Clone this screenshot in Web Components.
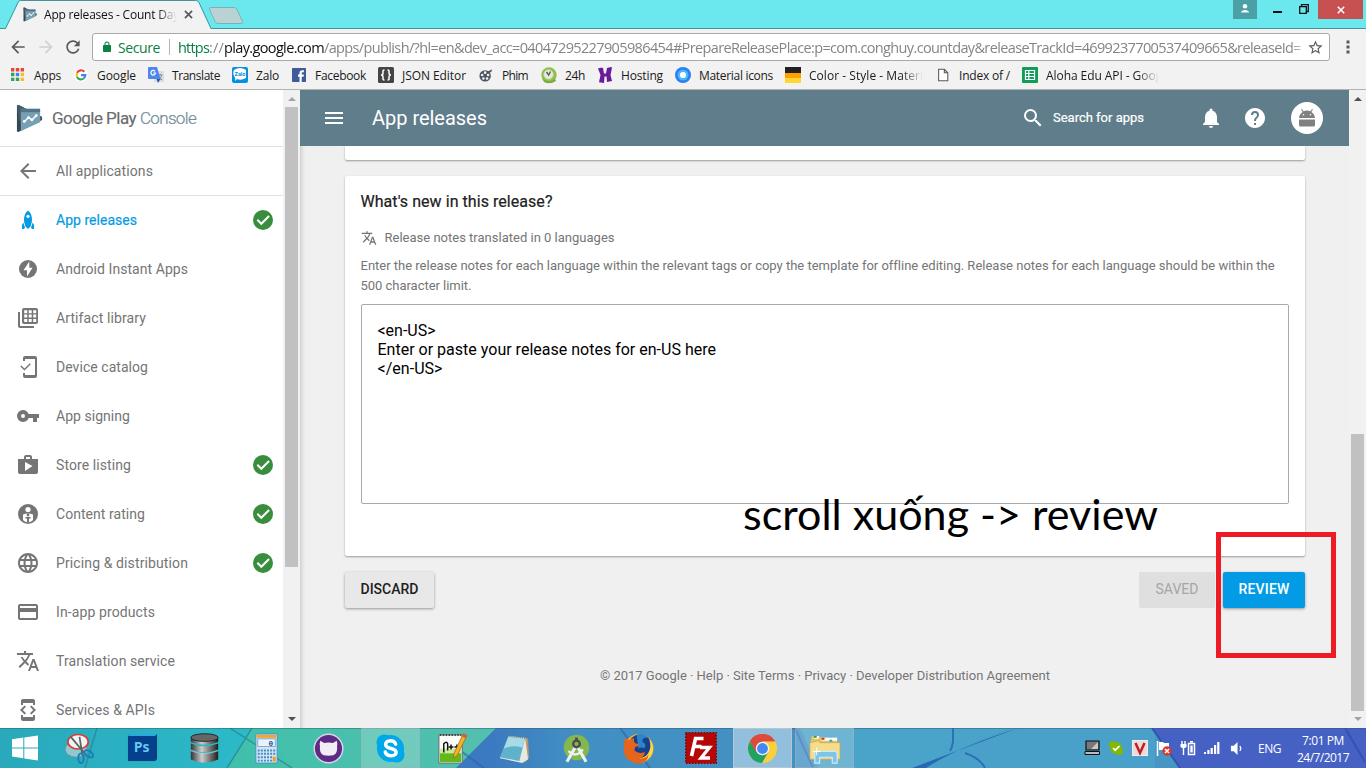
<!DOCTYPE html>
<html lang="en">
<head>
<meta charset="utf-8">
<title>App releases - Count Day</title>
<style>
html,body{margin:0;height:100%;overflow:hidden}
body{font-family:Roboto,"Open Sans",sans-serif;background:#f0f0f0}
</style>
</head>
<body>
<desktop-screen></desktop-screen>
<script>
const def=(name,html,cb)=>customElements.define(name,class extends HTMLElement{
  connectedCallback(){
    if(this.shadowRoot)return;
    const t=document.createElement('template');
    t.innerHTML=typeof html==='function'?html(this):html;
    this.attachShadow({mode:'open'}).append(t.content.cloneNode(true));
    if(cb)cb(this);
  }
});
const a=(el,n,d='')=>el.getAttribute(n)??d;

/* Text run set to a given width through letter spacing */
def('fit-text',`<style>:host{display:block;flex:none;white-space:pre}span{display:inline-block}</style><span><slot></slot></span>`,el=>{
  const w=+a(el,'w',0),s=el.shadowRoot.querySelector('span');
  if(w){const n=[...el.textContent].length;const r=s.getBoundingClientRect().width;
    s.style.letterSpacing=((w-r)/n)+'px';el.style.width=w+'px';}
});

const M=(d,extra='')=>['0 0 24 24',`<path d="${d}"/>${extra}`];
const ICONS={
back:M('M20 11H7.83l5.59-5.59L12 4l-8 8 8 8 1.41-1.41L7.83 13H20z'),
forward:M('M4 11h12.17l-5.59-5.59L12 4l8 8-8 8-1.41-1.41L16.17 13H4z'),
reload:M('M17.65 6.35C16.2 4.9 14.21 4 12 4c-4.42 0-7.99 3.58-7.99 8s3.57 8 7.99 8c3.73 0 6.84-2.55 7.73-6h-2.08c-.82 2.33-3.04 4-5.65 4-3.31 0-6-2.69-6-6s2.69-6 6-6c1.66 0 3.14.69 4.22 1.78L13 11h7V4z'),
lock:M('M18 8h-1V6a5 5 0 0 0-10 0v2H6c-1.1 0-2 .9-2 2v10c0 1.1.9 2 2 2h12c1.1 0 2-.9 2-2V10c0-1.1-.9-2-2-2zM9 8V6a3 3 0 0 1 6 0v2z'),
star:M('M22 9.24l-7.19-.62L12 2 9.19 8.63 2 9.24l5.46 4.73L5.82 21 12 17.27 18.18 21l-1.63-7.03L22 9.24zM12 15.4l-3.76 2.27 1-4.28-3.32-2.88 4.38-.38L12 6.1l1.71 4.04 4.38.38-3.32 2.88 1 4.28L12 15.4z'),
more:['0 0 18 18','<path d="M7.500 2.500h3v3h-3zM7.500 7.500h3v3h-3zM7.500 12.500h3v3h-3z"/>'],
menu:M('M3 18h18v-2H3v2zm0-5h18v-2H3v2zm0-7v2h18V6H3z'),
search:M('M15.5 14h-.79l-.28-.27A6.47 6.47 0 0 0 16 9.5 6.5 6.5 0 1 0 9.5 16c1.61 0 3.09-.59 4.23-1.57l.27.28v.79l5 4.99L20.49 19l-4.99-5zm-6 0a4.5 4.5 0 1 1 0-9 4.5 4.5 0 0 1 0 9z'),
bell:M('M12 22c1.1 0 2-.9 2-2h-4c0 1.1.9 2 2 2zm6-6v-5c0-3.07-1.64-5.64-4.5-6.32V4a1.5 1.5 0 0 0-3 0v.68C7.63 5.36 6 7.92 6 11v5l-2 2v1h16v-1l-2-2z'),
help:M('M12 2C6.48 2 2 6.48 2 12s4.48 10 10 10 10-4.48 10-10S17.52 2 12 2zm1 17h-2v-2h2v2zm2.07-7.75l-.9.92C13.45 12.9 13 13.5 13 15h-2v-.5c0-1.1.45-2.1 1.17-2.83l1.24-1.26c.37-.36.59-.86.59-1.41a2 2 0 0 0-4 0H8a4 4 0 0 1 8 0c0 .88-.36 1.68-.93 2.25z'),
rocket:['0 0 24 24','<path d="M12 2.500C8.800 5 8 8.500 8 11.500c0 2.500.6 4.800 1.600 7L12 21l2.400-2.500c1-2.200 1.600-4.500 1.600-7C16 8.500 15.200 5 12 2.500z"/><path d="M7.300 14.500L6 17v4h2l1-1.500zM16.700 14.500L18 17v4h-2l-1-1.500z"/><circle cx="12" cy="8.300" r="1.600" fill="#fff"/>'],
bolt:['0 0 24 24','<circle cx="12" cy="12" r="9"/><path d="M13.300 4.500L7.500 13.200H11v6.300l5.500-8.700H13.300z" fill="#fff"/>'],
library:['0 0 24 24','<path d="M4 6H2v14a2 2 0 0 0 2 2h14v-2H4z"/><rect x="6" y="2" width="16" height="16" rx="2"/><path fill="#fff" d="M8.200 4.200h3v3h-3zM12.700 4.200h3v3h-3zM17.200 4.200h3v3h-3zM8.200 8.600h3v3h-3zM12.700 8.600h3v3h-3zM17.200 8.600h3v3h-3zM8.200 13h3v3h-3zM12.700 13h3v3h-3zM17.200 13h3v3h-3z"/>'],
device:['0 0 24 24','<path d="M19 1H9a2 2 0 0 0-2 2v3h2V4h10v16H9v-2H7v3a2 2 0 0 0 2 2h10a2 2 0 0 0 2-2V3a2 2 0 0 0-2-2z"/><path d="M13.800 8.200l-5.300 5.300-3.200-3.100-1 1 4.200 4.200 6.300-6.300z"/>'],
key:M('M12.65 10C11.83 7.67 9.61 6 7 6a6 6 0 1 0 5.65 8H17v4h4v-4h2v-4H12.650zM7 14a2 2 0 1 1 0-4 2 2 0 0 1 0 4z'),
store:M('M16 6V4c0-1.110-.89-2-2-2h-4c-1.110 0-2 .89-2 2v2H2v13c0 1.110.89 2 2 2h16c1.110 0 2-.89 2-2V6h-6zm-6-2h4v2h-4V4zM9 18V9l7.500 4L9 18z'),
rating:['0 0 24 24','<circle cx="12" cy="12" r="10"/><circle cx="12" cy="7.500" r="2.600" fill="#fff"/><path fill="#fff" d="M7 12.500c3-1.500 7-1.500 10 0V18c-1.500 1.600-3 2.200-5 2.200S8.500 19.600 7 18z"/><circle cx="12" cy="13" r="1.400"/><path d="M9.500 15h5v1.500H13V20h-2v-3.500H9.500z"/>'],
globe:M('M11.99 2C6.470 2 2 6.480 2 12s4.470 10 9.990 10C17.520 22 22 17.520 22 12S17.520 2 11.990 2zm6.930 6h-2.950a15.650 15.650 0 0 0-1.380-3.560A8.030 8.030 0 0 1 18.920 8zM12 4.040c.83 1.200 1.480 2.530 1.910 3.960h-3.820c.43-1.430 1.080-2.760 1.910-3.960zM4.260 14a8.200 8.200 0 0 1 0-4h3.380a16.500 16.500 0 0 0 0 4H4.260zm.82 2h2.950c.32 1.250.78 2.450 1.380 3.560A7.990 7.990 0 0 1 5.080 16zm2.950-8H5.080a7.990 7.990 0 0 1 4.330-3.560A15.650 15.650 0 0 0 8.030 8zM12 19.960A14 14 0 0 1 10.090 16h3.820A14 14 0 0 1 12 19.960zM14.340 14H9.660a14.700 14.700 0 0 1 0-4h4.680a14.700 14.700 0 0 1 0 4zm.25 5.560c.6-1.110 1.060-2.310 1.380-3.560h2.950a8.030 8.030 0 0 1-4.330 3.560zM16.360 14a16.500 16.500 0 0 0 0-4h3.380a8.200 8.200 0 0 1 0 4h-3.380z'),
card:M('M20 4H4c-1.110 0-1.990.89-1.990 2L2 18c0 1.110.89 2 2 2h16c1.110 0 2-.89 2-2V6c0-1.110-.89-2-2-2zm0 14H4v-6h16v6zm0-10H4V6h16v2z'),
translate:M('M12.870 15.070l-2.540-2.510.03-.03A17.520 17.520 0 0 0 14.070 6H17V4h-7V2H8v2H1v1.990h11.170C11.500 7.920 10.440 9.750 9 11.350 8.070 10.320 7.300 9.190 6.690 8h-2c.73 1.630 1.730 3.170 2.980 4.560l-5.090 5.020L4 19l5-5 3.110 3.110.76-2.040zM18.500 10h-2L12 22h2l1.120-3h4.750L21 22h2l-4.500-12zm-2.620 7l1.620-4.330L19.120 17h-3.240z'),
api:M('M7 5h10v2h2V3c0-1.100-.9-1.990-2-1.990L7 1c-1.100 0-2 .9-2 2v4h2V5zm8.410 11.590L20 12l-4.590-4.590L14 8.830 17.170 12 14 15.170l1.410 1.420zM10 15.170L6.830 12 10 8.830 8.590 7.410 4 12l4.590 4.590L10 15.170zM17 19H7v-2H5v4c0 1.100.9 2 2 2h10c1.100 0 2-.9 2-2v-4h-2v2z'),
check:['0 0 20 20','<circle cx="10" cy="10" r="10" fill="#388e3c"/><path d="M4.300 9.800l4 4 7.800-7.800" fill="none" stroke="#fff" stroke-width="2"/>'],
play:['0 0 28 30','<path d="M1 1.500L2.500 1 27 13.500v3L2.500 29 1 28.500z" fill="#37474f"/><path d="M1 1.500L3 1 27 13.500v3L3 17z" fill="#455a64"/><path d="M5 5h20v14L5 28z" fill="#78a0b4"/><path d="M5 5h20v3.500H5z" fill="#52748a"/><path d="M8.500 18.500l4.500-4.500 3.500 2.500 5-5" fill="none" stroke="#fff" stroke-width="1.500"/><g fill="#fff"><circle cx="8.500" cy="18" r="1.400"/><circle cx="13" cy="14" r="1.400"/><circle cx="16.500" cy="16.500" r="1.400"/><circle cx="21" cy="12" r="1.400"/></g>'],
droid:['0 0 32 32','<circle cx="16" cy="16" r="16" fill="#fff"/><path d="M8 16a8 8 0 0 1 3.600-6L10 7.500l.9-.5 1.600 2.300a9 9 0 0 1 7 0L21 7l.9.500-1.500 2.500a8 8 0 0 1 3.600 6zM8 17.500h16V23a1.500 1.500 0 0 1-1.500 1.500h-13A1.500 1.500 0 0 1 8 23z" fill="#808080"/><circle cx="12.500" cy="12.800" r=".8" fill="#fff"/><circle cx="19.500" cy="12.800" r=".8" fill="#fff"/>'],
close:['0 0 10 10','<path d="M1 1l8 8M9 1l-8 8" stroke="currentColor" stroke-width="1.900"/>'],
apps:['0 0 14 14','<g fill="#e8453c"><path d="M0 0h3.500v3.500H0zM5 0h3.500v3.500H5zM10 0h3.500v3.500H10z"/></g><path fill="#35a355" d="M0 5h3.500v3.500H0zM0 10h3.500v3.500H0z"/><path fill="#3f83f1" d="M5 5h3.500v3.500H5z"/><path fill="#35a355" d="M5 10h3.500v3.500H5z"/><path fill="#fabb2d" d="M10 5h3.500v3.500H10zM10 10h3.500v3.500H10z"/>'],
google:['0 0 16 16','<circle cx="8" cy="8" r="8" fill="#fff"/><g fill="none" stroke-width="2.400"><path d="M11.800 4.300A5 5 0 0 0 3.500 5.600" stroke="#ea4335"/><path d="M3.500 5.600a5.200 5.200 0 0 0 0 4.800" stroke="#fbbc05"/><path d="M3.500 10.400a5 5 0 0 0 7.800 1.400" stroke="#34a853"/><path d="M11.300 11.800A5 5 0 0 0 13 8.100H8" stroke="#4285f4"/></g>'],
gtrans:['0 0 16 16','<rect x="6" y="4" width="10" height="11" rx="1" fill="#dcdcdc"/><path d="M9.500 8h5M12 6.800V8M10.300 12.500c2-1 3-2.500 3.200-4M10.500 9.500c.8 1.800 2 2.600 3.500 3.200" stroke="#6f8c9b" fill="none"/><path d="M1 0h8l3.500 12H1a1 1 0 0 1-1-1V1a1 1 0 0 1 1-1z" fill="#4f86ec"/><path d="M8.500 12h4L10 16z" fill="#3057b8"/><path d="M7 4.300A2.300 2.300 0 1 0 7.500 6H5.300" fill="none" stroke="#fff" stroke-width="1.200"/>'],
zalo:['0 0 16 16','<rect width="16" height="16" rx="2" fill="#0a8ee0"/><path d="M2 3Q8-1 14 3v8q-5 3-9 1l-2 2 .3-3Q0 7 2 3z" fill="#fff"/><text x="8" y="9" font-size="5.500" font-weight="bold" text-anchor="middle" fill="#0a8ee0" font-family="Roboto,sans-serif">Zalo</text>'],
fb:['0 0 14 14','<rect width="14" height="14" rx=".7" fill="#3f5b9a"/><path d="M7.500 14V8.700H6V6.600h1.500V5.300c0-2 1-3 2.900-3h1.500v2h-1.100c-.8 0-1.100.3-1.100 1v1.300h2.200l-.3 2.100H9.700V14z" fill="#fff"/>'],
json:['0 0 16 16','<rect width="16" height="16" rx="1.500" fill="#454545"/><path d="M6.500 3C4.500 3 5 4.500 5 6S4.500 8 3 8c1.500 0 2 .5 2 2s-.5 3 1.500 3M9.500 3c2 0 1.500 1.500 1.500 3s.5 2 2 2c-1.500 0-2 .5-2 2s.5 3-1.500 3" fill="none" stroke="#fff" stroke-width="1.500"/>'],
film:['0 0 16 16','<circle cx="7" cy="9" r="6.500" fill="#4b5460"/><path d="M10 4l5-2.500-1 3-2.500 1z" fill="#4b5460"/><g fill="#f2f2f2"><circle cx="7" cy="5.300" r="1.500"/><circle cx="3.600" cy="8" r="1.500"/><circle cx="10.400" cy="8" r="1.500"/><circle cx="5" cy="12" r="1.500"/><circle cx="9.200" cy="12" r="1.500"/></g>'],
h24:['0 0 16 16','<circle cx="8" cy="8" r="7.700" fill="#8fc04a"/><path d="M1 11q5 6 13 1l1 2q-6 4-12 1z" fill="#7cab3e"/><circle cx="7.500" cy="7.500" r="5" fill="#e3ead9" stroke="#a4c77a" stroke-width=".8"/><path d="M5.500 5l2.200 3L9.500 4.500" fill="none" stroke="#555" stroke-width="1.300"/>'],
hosting:['0 0 16 16','<path d="M1 1.500c2-1 4-1 5-.5L7 6.500h2L10 1l4-1 1 .5-1.500 7.500L15 14l-5 1-.5-5.500H7.500L7 16l-5-.7L3.500 8z" fill="#6a1b9a"/>'],
mi:['0 0 16 16','<circle cx="8" cy="8" r="8" fill="#2b7cf5"/><circle cx="8" cy="8" r="5.500" fill="#45b9fb"/><circle cx="8" cy="8" r="3.100" fill="#fff"/>'],
color:['0 0 16 16','<path d="M0 0h16v6H0z" fill="#212121"/><path d="M0 6h16v5H0z" fill="#ffa000"/><path d="M0 11h16v5H0z" fill="#fdd835"/>'],
file:['0 0 16 16','<path d="M3 1.500h6.500l4 4v9H3zM9.500 1.500v4h4" fill="#fff" stroke="#5a5a5a" stroke-width="1.200"/>'],
sheet:['0 0 16 16','<rect width="16" height="16" rx="1" fill="#0f9d58"/><path d="M3.500 3.500h9v9h-9zM3.500 6.500h9M3.500 9.500h9M6.800 3.500v9" fill="none" stroke="#fff" stroke-width="1.200"/>'],
person:['0 0 24 19','<rect width="24" height="19" fill="#4aa0a5"/><circle cx="12" cy="6.200" r="2.200" fill="#fff"/><path d="M8 12.500c0-3.500 8-3.500 8 0z" fill="#fff"/>'],
restore:['0 0 10 10','<path d="M.7 2.700h6.600v6.600H.7zM2.500 2.500v-1.800h6.800v6.800H7.500" fill="none" stroke="#111" stroke-width="1.300"/>'],
win:['0 0 26 26','<path fill="#fff" d="M0 4.200L11.300 2.600v9.800H0zM12.300 2.400L26 .4v12H12.300zM0 13.400h11.300v9.800L0 21.600zM12.300 13.400H26V25.500l-13.700-2z"/>'],
snip:['0 0 32 32','<ellipse cx="12.500" cy="13" rx="11.500" ry="8" fill="#8fc9cf" stroke="#6d8e99" transform="translate(-1 4)"/><ellipse cx="13.500" cy="9" rx="10.500" ry="7.500" fill="#f5f3f3" stroke="#d93a3a" stroke-width="1.700"/><path d="M6 4l15 18M15 4l3 19" stroke="#566" stroke-width="1.800"/><ellipse cx="24.500" cy="21.500" rx="5" ry="2.800" fill="none" stroke="#1d7bb8" stroke-width="2" transform="rotate(35 24.500 21.500)"/><ellipse cx="16.500" cy="26" rx="2.800" ry="5" fill="none" stroke="#1d7bb8" stroke-width="2"/>'],
ps:['0 0 32 32','<path d="M1 3l2-2h28v26l-2 2H1z" fill="#0a3d82"/><path d="M1 3h28v26H1z" fill="#04408c"/><path d="M1 3l2-2h28l-2 2z" fill="#2aa8e0"/><text x="15" y="20" text-anchor="middle" font-family="Open Sans,sans-serif" font-weight="bold" font-size="14.500" fill="#63c8f2">Ps</text>'],
db:['0 0 32 34','<defs><linearGradient id="g"><stop offset="0" stop-color="#333"/><stop offset=".4" stop-color="#ccc"/><stop offset="1" stop-color="#1d1d1d"/></linearGradient></defs><g fill="url(#g)"><path d="M1 5h30v5q-15 6-30 0zM1 11.500q15 6 30 0V18q-15 6-30 0zM1 19.500q15 6 30 0V29q-15 7-30 0z"/></g><path d="M1 19.500q15 6 30 0" stroke="#ddd" fill="none" opacity=".6"/><ellipse cx="16" cy="5" rx="15" ry="4.200" fill="#666" stroke="#222"/>'],
calc:['0 0 24 32','<rect x="1" y="1" width="22" height="30" rx="1" fill="#cfe6f7" stroke="#4a90c8"/><rect x="2" y="2" width="20" height="3" fill="#f4a42b"/><rect x="3" y="6" width="18" height="8" fill="#e8f2fa" stroke="#6b9cc0" stroke-width=".8"/><text x="16.500" y="13" font-size="8" font-family="Liberation Mono,monospace" text-anchor="middle" font-weight="bold" fill="#234a8a">0</text><path d="M3 18h18M3 21.500h18M3 25h15M3 28.500h15" stroke="#4a88c0" stroke-width="2" stroke-dasharray="2 1.200"/><path d="M18.500 24.500h3v5h-3z" fill="#f29a1f"/>'],
github:['0 0 32 32','<circle cx="16" cy="16" r="15.500" fill="#dcd3e3"/><circle cx="16" cy="16" r="14" fill="#5d2a85"/><path d="M7.500 8l4 2.200q4.500-.8 9 0L24.500 8q1 3 .3 5.500 1 7.500-3.800 9.500-5 1-10 0-4.800-2-3.800-9.500-.7-2.500.3-5.500z" fill="#f1edf3"/>'],
skype:['0 0 32 32','<circle cx="16" cy="16" r="14" fill="#00a8ea"/><circle cx="9.500" cy="9.500" r="8" fill="#00a8ea"/><circle cx="22.500" cy="22.500" r="8" fill="#00a8ea"/><path d="M21.300 11.500C20 6.500 11 6.800 11 11.800c0 5.500 10.800 2.800 10.800 8 0 4.800-9.800 5-11.200-.2" fill="none" stroke="#fff" stroke-width="3.600" stroke-linecap="round"/>'],
npp:['0 0 32 34','<path d="M2 3h24v29H2z" fill="#fbfbfb" stroke="#666"/><path d="M3 21h22v10H3z" fill="#60ba1c"/><path d="M3 17h22v5H3z" fill="#c9eb9b"/><path d="M3 3h22" stroke="#444" stroke-width="2" stroke-dasharray="1.500 1.500"/><path d="M7 21v-9q3-3 4 0v7M12 15.500h5M14.500 13v5M18 15.500h5M20.500 13v5" fill="none" stroke="#111" stroke-width="1.500"/><path d="M27 2l4 1.500L21 24l-4 3 .5-5z" fill="#f3b02b" stroke="#a55c0e" stroke-width=".7"/><path d="M27 2l4 1.500-1 3-4-1.500z" fill="#e05a3a"/>'],
note:['0 0 32 32','<path d="M26 4l4 2 1 20-5 5z" fill="#b59a6b"/><path d="M10 3l17 2 3 22-6 4L1 26z" fill="#e8e8e2"/><path d="M10 3l17 2-6 24L1 25z" fill="#5fb2ca"/><path d="M10 3l17 2-3 10Q14 12 5 16z" fill="#a8dbe6"/><path d="M10 3l17 2" stroke="#777" stroke-width="2" stroke-dasharray="1 1"/>'],
as:['0 0 32 34','<circle cx="16" cy="16" r="14" fill="#84b84c"/><path d="M14.500 16L5.500 31.500M17.500 16l9 15.500" stroke="#eef1f2" stroke-width="3.400"/><path d="M7 20q9 8 16-2" fill="none" stroke="#eef1f2" stroke-width="2.600"/><circle cx="16" cy="12" r="3.600" fill="none" stroke="#4c4c50" stroke-width="2.600"/><path d="M16 5v4" stroke="#4c4c50" stroke-width="3"/>'],
ff:['0 0 32 32','<circle cx="16.500" cy="16" r="15" fill="#f5b52a"/><circle cx="17.500" cy="13.500" r="12" fill="#18408c"/><path d="M14 2q8-3 11 3-5-1-5 4 5 2 2 7-3-2-6 0z" fill="#2e84c9"/><path d="M27 6q3 9-1 15-4 6-10 5l3 3q11-2 12-12 0-7-4-11z" fill="#fbd94b"/><path d="M2.500 5q2 1 3 2.500 2-2 6-2-1 3 1 5l4 1q0 2-4 3 0 2-1 3 4 5 11 2 0 5-6 7 8 0 10-5-1 10-11 10Q4 30 1.500 22-.5 12 2.500 5z" fill="#e5651d"/>'],
fz:['0 0 32 32','<rect x=".7" y=".7" width="30.600" height="30.600" fill="#b60707" stroke="#700" stroke-dasharray="1.500 1.500" stroke-width="1.300"/><path d="M18.500 6.500h-8L6.500 24M8.500 14.500h8" fill="none" stroke="#fff" stroke-width="3.600"/><path d="M15 15.500h9.500L16 26h9" fill="none" stroke="#fff" stroke-width="3.300"/>'],
chrome:['0 0 32 32','<circle cx="16" cy="16" r="15" fill="#fbcf3c"/><path d="M16 16L3 8.500a15 15 0 0 1 26 0H16z" fill="#dd4b3e"/><path d="M3 8.500A15 15 0 0 0 15.500 31l6.500-11.500-6 3.500-6-3.500z" fill="#1ea362"/><path d="M3 8.500a15 15 0 0 1 26 0H16L9.500 20z" fill="#dd4b3e"/><circle cx="16" cy="16" r="7" fill="#f4f4f4"/><circle cx="16" cy="16" r="5.600" fill="#4688f1"/>'],
folder:['0 0 34 32','<path d="M3 5l1-2h8l1 2h17v6H3z" fill="#e3c366"/><path d="M6 3h5v3H6zM14 5h16v3H14z" fill="#fff"/><path d="M6 3h3v2H6z" fill="#2aa33a"/><path d="M14 5h3v2h-3z" fill="#d22"/><path d="M22 7h3v2h-3z" fill="#28a0d8"/><path d="M2 10l9-2 1 2h21v17H2z" fill="#f5dd8b" stroke="#c7a54a" stroke-width=".7"/><path d="M7 31V21q0-2 2-2h18q3 0 3 2v10h-5v-6H12v6z" fill="#7fc4e6" stroke="#c9ecf9" stroke-width="1.200"/><path d="M5 19h8M9 15v8" stroke="#fff"/>'],
laptop:['0 0 16 16','<path d="M2 1h13v9H2z" fill="#777" stroke="#111" stroke-width="1.200"/><path d="M7 9l7-7v7z" fill="#c8c8c8"/><path d="M1 11.500h14.500v3H1z" fill="#bbb" stroke="#111"/>'],
sgreen:['0 0 16 16','<circle cx="8" cy="8" r="6" fill="#7fba00"/><circle cx="4.800" cy="4.800" r="3.700" fill="#7fba00"/><circle cx="11.300" cy="11.300" r="3.700" fill="#7fba00"/><path d="M5 8l2.200 2.200L11.500 6" stroke="#fff" stroke-width="1.700" fill="none"/>'],
vkey:['0 0 16 16','<rect x=".5" y=".5" width="15" height="15" fill="#f3d9d6" stroke="#e9efff"/><path d="M3.500 3l4.500 10L12.500 3" fill="none" stroke="#c01f1f" stroke-width="2.500"/>'],
flag:['0 0 16 16','<path d="M1.500 1v15" stroke="#fff" stroke-width="1.500"/><path d="M3 2h4l1 1h5v7H3z" fill="#fff"/><circle cx="11" cy="11" r="4.700" fill="#d9362c"/><path d="M9 9l4 4M13 9l-4 4" stroke="#fff" stroke-width="1.600"/>'],
battery:['0 0 16 16','<path d="M8.500 3.500h6v11h-6zM10 1.800h3" fill="none" stroke="#fff" stroke-width="1.500"/><path d="M10.300 5.500h2.400v7h-2.400z" fill="#fff"/><path d="M2 1v3M5 1v3M3.500 7v8" stroke="#fff" stroke-width="1.400"/><path d="M.5 4h6v3l-1.500 1H2L.5 7z" fill="#fff"/>'],
signal:['0 0 16 16','<path fill="#fff" d="M0 12h2v2H0zM3.300 10h2.200v4H3.300zM6.600 8h2.200v6H6.600zM10 5h2.200v9H10zM13.200 2h2.200v12h-2.200z"/>'],
speaker:['0 0 16 16','<path fill="#fff" d="M1 5h3l4-4v14l-4-4H1z"/><path d="M10.500 5.500q2 2.500 0 5" stroke="#fff" fill="none" stroke-width="1.300"/>']
};
def('ui-icon',el=>{const i=ICONS[a(el,'name')],w=a(el,'w','24'),h=a(el,'h',w);
return `<style>:host{display:block;flex:none;width:${w}px;height:${h}px}svg{display:block;fill:currentColor;overflow:visible}</style><svg width="${w}" height="${h}" viewBox="${i[0]}">${i[1]}</svg>`});

def('tab-strip',`<style>
:host{display:flex;height:29px;background:#6be8ee;position:relative;box-sizing:border-box;font:12px "Open Sans",sans-serif;color:#111}
.bg{position:absolute;left:0;top:0}
.tab{position:relative;display:flex;align-items:center;padding-left:23px;width:189px;height:29px;box-sizing:border-box}
.title{margin-left:7px;width:136px;overflow:hidden;-webkit-mask-image:linear-gradient(90deg,#000 113px,transparent 133px)}
.x{margin-left:-5px;align-self:center;position:relative;color:#5a5a5a}
.win{margin-left:auto;display:flex;height:19px;position:relative}
.min{width:9px;height:2px;background:#111;margin:11px 17px 0 16px}
.close{width:45px;height:19px;background:#c75050;color:#fff;display:flex;align-items:center;justify-content:center;margin:0 3px 0 9px}
</style><svg class="bg" width="1366" height="29"><path d="M0 28.500h5.500L18 2.500Q18.700.5 21 .5h174.500q2.500 0 3.500 2L211 28.500H1366" fill="none" stroke="#459499"/><path d="M0 29h6L18.500 3Q19 1 21 1h174.500q2 0 3 2L210.500 29z" fill="#f2f2f2"/><path d="M211 7.500h23q2 0 3 2l5.500 12q.5 2-1.500 2h-23q-2 0-3-2l-5.500-12q-.5-2 1.500-2z" fill="#b9d3d5" stroke="#7fb0b3"/></svg>
<div class="tab"><ui-icon name="play" w="14" h="15"></ui-icon><div class="title"><fit-text w="135">App releases - Count Day</fit-text></div></div><ui-icon class="x" name="close" w="9"></ui-icon>
<div class="win"><ui-icon name="person" w="24" h="19"></ui-icon><div class="min"></div><ui-icon name="restore" w="10" style="margin-top:4px"></ui-icon><div class="close"><ui-icon name="close" w="8"></ui-icon></div></div>`);

def('nav-bar',`<style>
:host{display:flex;height:32px;align-items:center;background:#f2f2f2;color:#5a5a5a;padding:4px 9px 0 8px;box-sizing:border-box;font:14.500px "Open Sans",sans-serif}
ui-icon+ui-icon{margin-left:10px}
.box{display:flex;align-items:center;height:28px;width:1238px;box-sizing:border-box;border:1px solid #a9a9a9;border-radius:3px;background:#fff;margin-left:9px;padding:0 5px 0 8px}
.sec{color:#0b8043;margin-left:5px;font-size:14px}.sep{width:1px;height:16px;background:#b5b5b5;margin:0 8px 0 9px}
.g{color:#0b8043}.d{color:#111}.u{color:#858585;display:flex;width:1126px;overflow:hidden;-webkit-mask-image:linear-gradient(90deg,#000 1113px,rgba(0,0,0,.4) 1124px)}
</style><ui-icon name="back" w="20"></ui-icon><ui-icon name="forward" w="20" style="color:#d0d0d0;margin-left:8px"></ui-icon><ui-icon name="reload" w="20" style="margin-left:7px"></ui-icon>
<div class="box"><ui-icon name="lock" w="12" h="14" style="color:#0b8043"></ui-icon><fit-text class="sec" w="42">Secure</fit-text><div class="sep"></div>
<div class="u"><fit-text class="g" w="31">https</fit-text><fit-text w="15">://</fit-text><fit-text class="d" w="100">play.google.com</fit-text><fit-text w="977">/apps/publish/?hl=en&amp;dev_acc=04047295227905986454#PrepareReleasePlace:p=com.conghuy.countday&amp;releaseTrackId=4699237700537409665&amp;releaseId=</fit-text></div>
<ui-icon name="star" w="17" style="margin-left:auto"></ui-icon></div><ui-icon name="more" w="18" style="margin:0 0 0 auto"></ui-icon>`);

def('book-mark',el=>`<style>:host{display:flex;align-items:center;position:relative;width:${a(el,'span')}px;flex:none}
.i{width:16px;display:flex;justify-content:center;flex:none}fit-text{margin-left:8px}
.t{flex:none;${el.hasAttribute('fade')?`-webkit-mask-image:linear-gradient(90deg,#000 ${+a(el,'fade')-14}px,transparent ${+a(el,'fade')+8}px)`:''}}</style><div class="i"><ui-icon name="${a(el,'icon')}" w="${a(el,'s','16')}"></ui-icon></div><div class="t"><fit-text w="${a(el,'w')}">${el.textContent}</fit-text></div>`);
def('bookmark-bar',`<style>:host{display:flex;height:29px;box-sizing:border-box;border-bottom:1px solid #b2b2b2;background:#f2f2f2;padding-left:10px;font:12px "Open Sans",sans-serif;color:#1a1a1a}</style>
<book-mark icon="apps" s="13.500" span="63" w="27">Apps</book-mark><book-mark icon="google" s="14" span="75" w="39">Google</book-mark><book-mark icon="gtrans" span="84" w="48">Translate</book-mark><book-mark icon="zalo" span="59" w="23">Zalo</book-mark><book-mark icon="fb" s="14" span="87" w="51">Facebook</book-mark><book-mark icon="json" span="100" w="64">JSON Editor</book-mark><book-mark icon="film" s="14" span="63" w="26">Phim</book-mark><book-mark icon="h24" span="56" w="20">24h</book-mark><book-mark icon="hosting" span="78" w="42">Hosting</book-mark><book-mark icon="mi" span="110" w="74">Material icons</book-mark><book-mark icon="color" span="150" w="114" fade="114">Color - Style - Materi</book-mark><book-mark icon="file" s="14" span="87" w="51">Index of /</book-mark><book-mark icon="sheet" span="160" w="116" fade="113">Aloha Edu API - Goog</book-mark>`);

def('scroll-bar',el=>`<style>:host{display:flex;flex-direction:column;align-items:center;justify-content:space-between;width:17px;flex:none;height:638px;box-sizing:border-box;background:#f1f1f1;position:relative;padding:7px 0}
i{border:4px solid transparent;width:0;height:0}.u{border-top:0;border-bottom-color:${a(el,'up','#505050')}}.d{border-bottom:0;border-top-color:${a(el,'down','#505050')}}
b{position:absolute;left:2px;width:13px;top:${a(el,'top')}px;height:${a(el,'len')}px;background:#c1c1c1}</style><i class="u"></i><b></b><i class="d"></i>`);

def('nav-item',el=>`<style>:host{display:flex;align-items:center;height:49px;flex:none;padding:0 10px 0 16px;color:#757575;font:14px Roboto,sans-serif}
:host([active]){color:#039be5}fit-text{margin-left:16px;${el.hasAttribute('active')?'-webkit-text-stroke:.2px':''}}.c{margin-left:auto}</style><ui-icon name="${a(el,'icon')}" w="24"></ui-icon><fit-text w="${a(el,'w')}">${el.innerHTML}</fit-text>${el.hasAttribute('done')?'<ui-icon class="c" name="check" w="20"></ui-icon>':''}`);
def('side-bar',`<style>:host{display:flex;width:300px;height:638px;background:#fff}
nav{display:flex;flex-direction:column;width:283px;overflow:hidden}
.logo{display:flex;align-items:center;height:56px;flex:none;border-bottom:1px solid #e0e0e0;padding-left:16px;font:17px/24px Roboto,sans-serif;color:#6b6b6b}
.logo .p{margin-left:9px;-webkit-text-stroke:.15px}.logo .c{color:#6f8b98;margin-left:4px;font-weight:300;-webkit-text-stroke:.2px}
.all{height:48px;border-bottom:1px solid #e0e0e0;margin-bottom:-1px}</style>
<nav><div class="logo"><ui-icon name="play" w="27" h="29"></ui-icon><fit-text class="p" w="84">Google Play</fit-text><fit-text class="c" w="56">Console</fit-text></div>
<nav-item class="all" icon="back" w="97">All applications</nav-item>
<nav-item icon="rocket" w="81" active done>App releases</nav-item>
<nav-item icon="bolt" w="132">Android Instant Apps</nav-item>
<nav-item icon="library" w="90">Artifact library</nav-item>
<nav-item icon="device" w="92">Device catalog</nav-item>
<nav-item icon="key" w="74">App signing</nav-item>
<nav-item icon="store" w="75" done>Store listing</nav-item>
<nav-item icon="rating" w="89" done>Content rating</nav-item>
<nav-item icon="globe" w="132" done>Pricing &amp; distribution</nav-item>
<nav-item icon="card" w="99">In-app products</nav-item>
<nav-item icon="translate" w="119">Translation service</nav-item>
<nav-item icon="api" w="99">Services &amp; APIs</nav-item></nav>
<scroll-bar up="#a3a3a3" top="17" len="460"></scroll-bar>`);

def('app-header',`<style>:host{display:flex;align-items:center;height:56px;flex:none;background:#607d8b;color:#fff;padding:0 26px 0 22px;font:20px Roboto,sans-serif}
.t{margin-left:26px}.s{margin:0 59px 2px 8px;font-size:13px;-webkit-text-stroke:.2px}</style>
<ui-icon name="menu" w="24"></ui-icon><fit-text class="t" w="115">App releases</fit-text><ui-icon name="search" w="24" style="margin-left:auto"></ui-icon><fit-text class="s" w="91">Search for apps</fit-text>
<ui-icon name="bell" w="24" style="margin:0 20px 0 -4px"></ui-icon><ui-icon name="help" w="24"></ui-icon><ui-icon name="droid" w="32" style="margin-left:24px"></ui-icon>`);
def('ui-card',`<style>:host{display:block;box-sizing:border-box;width:960px;flex:none;background:#fff;border-radius:2px;box-shadow:0 1px 2px rgba(0,0,0,.36)}</style><slot></slot>`);
def('ui-button',`<style>:host{display:flex;align-items:center;justify-content:center;height:36px;box-sizing:border-box;padding-bottom:2px;border-radius:2px;font:500 14px Roboto,sans-serif;box-shadow:0 1px 3px rgba(0,0,0,.38);background:#e8e8e8;color:#212121}
:host([kind=off]){background:#dfdfdf;color:#a6a6a6;box-shadow:none;font-weight:400}:host([kind=main]){background:#039be5;color:#fff}</style><slot></slot>`);
def('call-out',`<style>:host{position:absolute;z-index:5;left:1216px;top:532px;width:120px;height:126px;box-sizing:border-box;border:5px solid #ed1c24}</style>`);
def('callout-label',`<style>:host{position:absolute;z-index:5;left:743px;top:488px;font:43px/52px Lato,sans-serif;color:#000}</style><fit-text w="415">scroll xuống -&gt; review</fit-text>`);
def('release-page',`<style>:host{display:flex;flex-direction:column;width:1049px;height:638px;background:#f0f0f0}
main{display:flex;flex-direction:column;flex:1;padding:0 44px 0 45px;box-shadow:inset 5px 0 5px -4px rgba(0,0,0,.2)}
.a{height:14px;border-radius:0 0 2px 2px}.b{height:380px;margin-top:16px;padding:16px;color:#757575;font:13px/20px Roboto,sans-serif}
.b>fit-text{margin-left:-.5px}
.h{font-size:16px;color:#212121;-webkit-text-stroke:.2px}.r{display:flex;margin:16px 0 8px;align-items:center}.r fit-text{margin-left:7.500px}
.ta{box-sizing:border-box;height:200px;margin-top:8px;border:1px solid #a9a9a9;padding:16px 15.500px;font-size:16px;line-height:19px;color:#000;border-radius:2px}
.btns{display:flex;margin-top:16px}footer{font:13px/20px Roboto,sans-serif;color:#757575;margin:58px auto 0}</style>
<app-header></app-header><main><ui-card class="a"></ui-card>
<ui-card class="b"><fit-text class="h" w="192">What's new in this release?</fit-text>
<div class="r"><ui-icon name="translate" w="16"></ui-icon><fit-text w="230">Release notes translated in 0 languages</fit-text></div>
<fit-text w="913">Enter the release notes for each language within the relevant tags or copy the template for offline editing. Release notes for each language should be within the</fit-text><fit-text w="111">500 character limit.</fit-text>
<div class="ta"><fit-text w="58">&lt;en-US&gt;</fit-text><fit-text w="338.500">Enter or paste your release notes for en-US here</fit-text><fit-text w="65">&lt;/en-US&gt;</fit-text></div></ui-card>
<div class="btns"><ui-button style="width:89px"><fit-text w="58">DISCARD</fit-text></ui-button><ui-button kind="off" style="width:76px;margin-left:auto"><fit-text w="43">SAVED</fit-text></ui-button><ui-button kind="main" style="width:82px;margin-left:8px"><fit-text w="51">REVIEW</fit-text></ui-button></div>
<footer><fit-text w="450">© 2017 Google · Help · Site Terms · Privacy · Developer Distribution Agreement</fit-text></footer></main>`);

def('task-item',el=>`<style>:host{display:flex;width:62px;height:40px;align-items:center;justify-content:center;box-sizing:border-box;flex:none}
div{display:flex;width:59px;height:40px;align-items:center;justify-content:center;box-sizing:border-box}
:host([open]) div{background:rgba(255,255,255,.2);border:1px solid rgba(255,255,255,.45);outline:1px solid rgba(20,70,100,.25);outline-offset:-1px}
:host([front]) div{background:rgba(255,255,255,.42);border-color:#eaf3f8}</style><div><ui-icon name="${a(el,'icon')}" w="${a(el,'s','31')}"></ui-icon></div>`);
def('task-bar',`<style>:host{display:flex;height:40px;position:relative;overflow:hidden;color:#fff;font:12px "Open Sans",sans-serif;align-items:center}
.bg{position:absolute;left:0;top:0}.st{width:50px;display:flex;justify-content:center;position:relative}task-item{position:relative;left:-.5px}
.tray{position:relative;display:flex;margin-left:auto;align-items:center;gap:8px;padding-right:17px}
.clock{display:flex;flex-direction:column;align-items:center;line-height:17px;margin-left:8px;padding-top:1px}</style>
<svg class="bg" width="1366" height="40"><defs><linearGradient id="a"><stop offset="0" stop-color="#29a9bb"/><stop offset="1" stop-color="#2cbac8"/></linearGradient><linearGradient id="b"><stop offset="0" stop-color="#3fc0ab"/><stop offset="1" stop-color="#55bfae"/></linearGradient><linearGradient id="c"><stop offset="0" stop-color="#3b78c0"/><stop offset=".36" stop-color="#3b7ac0"/><stop offset=".42" stop-color="#428fc3"/><stop offset="1" stop-color="#4899c5"/></linearGradient></defs>
<rect width="1366" height="40" fill="url(#c)"/><path d="M0 0h252L227 40H0z" fill="url(#a)"/><path d="M252 0h244L456 40H227z" fill="url(#b)"/>
<path d="M252 0L227 40M97 0L85 40M230 0l62 40" stroke="#277f91" stroke-width="1.500" opacity=".65"/><path d="M454 18l30 22M620 0l30 40M795 0l18 40" stroke="#2b64b0" stroke-width="2" fill="none" opacity=".65"/>
<path d="M800 0h210L915 40H818z" fill="#4aa3c8"/><path d="M1010 0L915 40h240V0z" fill="#49a0c8"/><path d="M1018 0L912 40h14q30-20 92-40z" fill="#2868b5"/><path d="M953 0v14q-1 6-3 9M965 25q15 5 20 15" stroke="#2e70b8" stroke-width="2" fill="none"/>
<path d="M1152 0l28 40h186V0z" fill="#4561c3"/><path d="M1152 0l28 40M1345 0l20 34" stroke="#3354ae" stroke-width="2"/><path d="M0 .5h1366" stroke="#315f78" opacity=".5"/></svg>
<div class="st"><ui-icon name="win" w="26"></ui-icon></div>
<task-item icon="snip"></task-item><task-item icon="ps"></task-item><task-item icon="db"></task-item><task-item icon="calc"></task-item><task-item icon="github"></task-item><task-item icon="skype" open></task-item><task-item icon="npp" s="33"></task-item><task-item icon="note"></task-item><task-item icon="as"></task-item><task-item icon="ff"></task-item><task-item icon="fz" s="32"></task-item><task-item icon="chrome" open front></task-item><task-item icon="folder" s="33" open></task-item>
<div class="tray"><ui-icon name="laptop" w="16"></ui-icon><ui-icon name="sgreen" w="16"></ui-icon><ui-icon name="vkey" w="16"></ui-icon><ui-icon name="flag" w="16"></ui-icon><ui-icon name="battery" w="16"></ui-icon><ui-icon name="signal" w="16"></ui-icon><ui-icon name="speaker" w="15" style="margin-left:2px"></ui-icon><fit-text w="23" style="margin-left:5px">ENG</fit-text><div class="clock"><fit-text w="42">7:01 PM</fit-text><fit-text w="52">24/7/2017</fit-text></div></div>`);

def('desktop-screen',`<style>:host{display:flex;flex-direction:column;width:1366px;height:768px;overflow:hidden;position:relative}.page{display:flex;height:638px}</style>
<tab-strip></tab-strip><nav-bar></nav-bar><bookmark-bar></bookmark-bar><div class="page"><side-bar></side-bar><release-page></release-page><scroll-bar top="344" len="277" down="#a3a3a3"></scroll-bar></div><task-bar></task-bar><callout-label></callout-label><call-out></call-out>`);
</script>
</body>
</html>
